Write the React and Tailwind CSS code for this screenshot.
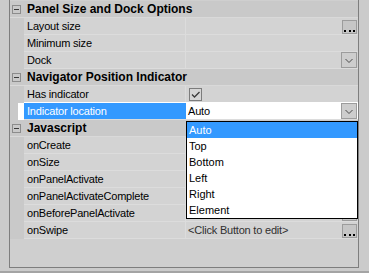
import React from 'react';

const font = { fontFamily: '"Liberation Sans", Arial, sans-serif' };

const DotsButton = () => (
  <div className="ml-auto mr-px mt-[2px] self-start w-[15px] h-[14px] border border-[#9c9c9c] bg-[#c6c6c6] flex items-end justify-center gap-[2.5px] pb-[1px]">
    <div className="w-[2px] h-[2px] bg-black" />
    <div className="w-[2px] h-[2px] bg-black" />
    <div className="w-[2px] h-[2px] bg-black" />
  </div>
);

const DropButton = () => (
  <div className="ml-auto mr-px w-[16px] h-[16px] border border-[#9c9c9c] bg-[#cdcdcd] flex items-center justify-center">
    <svg width="14" height="14" viewBox="0 0 14 14">
      <path d="M3.5 6 L7 9.5 L10.5 6" fill="none" stroke="#4a4a4a" strokeWidth="1" />
    </svg>
  </div>
);

const CheckBox = () => (
  <div className="ml-px w-[13px] h-[13px] border border-[#7c7c7c] bg-[#d6d6d6] flex items-center justify-center">
    <svg width="11" height="11" viewBox="0 0 11 11">
      <path d="M2 5.5 L4.5 8 L9.5 3" fill="none" stroke="#3c3c3c" strokeWidth="1.3" />
    </svg>
  </div>
);

const Header = ({ title }) => (
  <div className="flex items-center h-[17px] bg-[#c9c9c9] border-b border-[#d9d9d9]">
    <div className="ml-[2px] w-[9px] h-[9px] border border-[#8c8c8c] flex items-center justify-center">
      <div className="w-[5px] h-px bg-[#3a3a3a]" />
    </div>
    <span className="ml-[6px] text-[12px] font-bold text-black leading-none">{title}</span>
  </div>
);

const Row = ({ label, children, selected, whiteLine }) => (
  <div className="flex h-[17px]">
    {selected ? (
      <div className="w-[14px] flex">
        <div className="w-[8px] bg-[#c9c9c9]" />
        <div className="flex-1 bg-white" />
      </div>
    ) : (
      <div className="w-[14px] bg-[#c9c9c9]" />
    )}
    <div className={`flex flex-1 border-b ${whiteLine ? 'border-white' : 'border-[#dcdcdc]'}`}>
      <div
        className={`w-[162px] border-r pl-[3px] flex items-center text-[11px] tracking-[-0.2px] ${
          selected ? 'bg-[#3399ff] text-white border-[#3399ff]' : 'bg-[#d3d3d3] text-black border-[#dcdcdc]'
        }`}
      >
        {label}
      </div>
      <div
        className={`flex-1 flex items-center pl-[2px] text-[11px] tracking-[-0.2px] ${
          selected ? 'bg-white text-black' : 'bg-[#d3d3d3] text-[#303030]'
        }`}
      >
        {children}
      </div>
    </div>
  </div>
);

const options = ['Auto', 'Top', 'Bottom', 'Left', 'Right', 'Element'];

export default function App() {
  return (
    <div className="relative w-[369px] h-[273px] bg-[#cbcbcb] overflow-hidden flex flex-col" style={font}>
      <div className="ml-[9px] w-[350px] h-[268px] border-l border-r border-b border-[#7e7e7e] pt-px bg-[#cfcfcf] flex flex-col">
        <Header title="Panel Size and Dock Options" />
        <Row label="Layout size">
          <DotsButton />
        </Row>
        <Row label="Minimum size" />
        <Row label="Dock">
          <DropButton />
        </Row>
        <Header title="Navigator Position Indicator" />
        <Row label="Has indicator" whiteLine>
          <CheckBox />
        </Row>
        <Row label="Indicator location" selected>
          <span>Auto</span>
          <DropButton />
        </Row>
        <Header title="Javascript" />
        <Row label="onCreate">
          <DotsButton />
        </Row>
        <Row label="onSize">
          <DotsButton />
        </Row>
        <Row label="onPanelActivate">
          <DotsButton />
        </Row>
        <Row label="onPanelActivateComplete">
          <DotsButton />
        </Row>
        <Row label="onBeforePanelActivate">
          <DotsButton />
        </Row>
        <Row label="onSwipe">
          <span>&lt;Click Button to edit&gt;</span>
          <DotsButton />
        </Row>
        <div className="flex-1 bg-[#cfcfcf]" />
      </div>
      <div className="h-[3px]" />
      <div className="h-[2px] bg-[#a4a4a4]" />

      <div className="absolute left-[186px] top-[121px] w-[172px] border border-black bg-white flex flex-col">
        {options.map((o, i) => (
          <div
            key={o}
            className={`h-[16px] flex items-center pl-[2px] text-[11px] ${
              i === 0 ? 'bg-[#3399ff] text-white' : 'text-black'
            }`}
          >
            {o}
          </div>
        ))}
      </div>
    </div>
  );
}
